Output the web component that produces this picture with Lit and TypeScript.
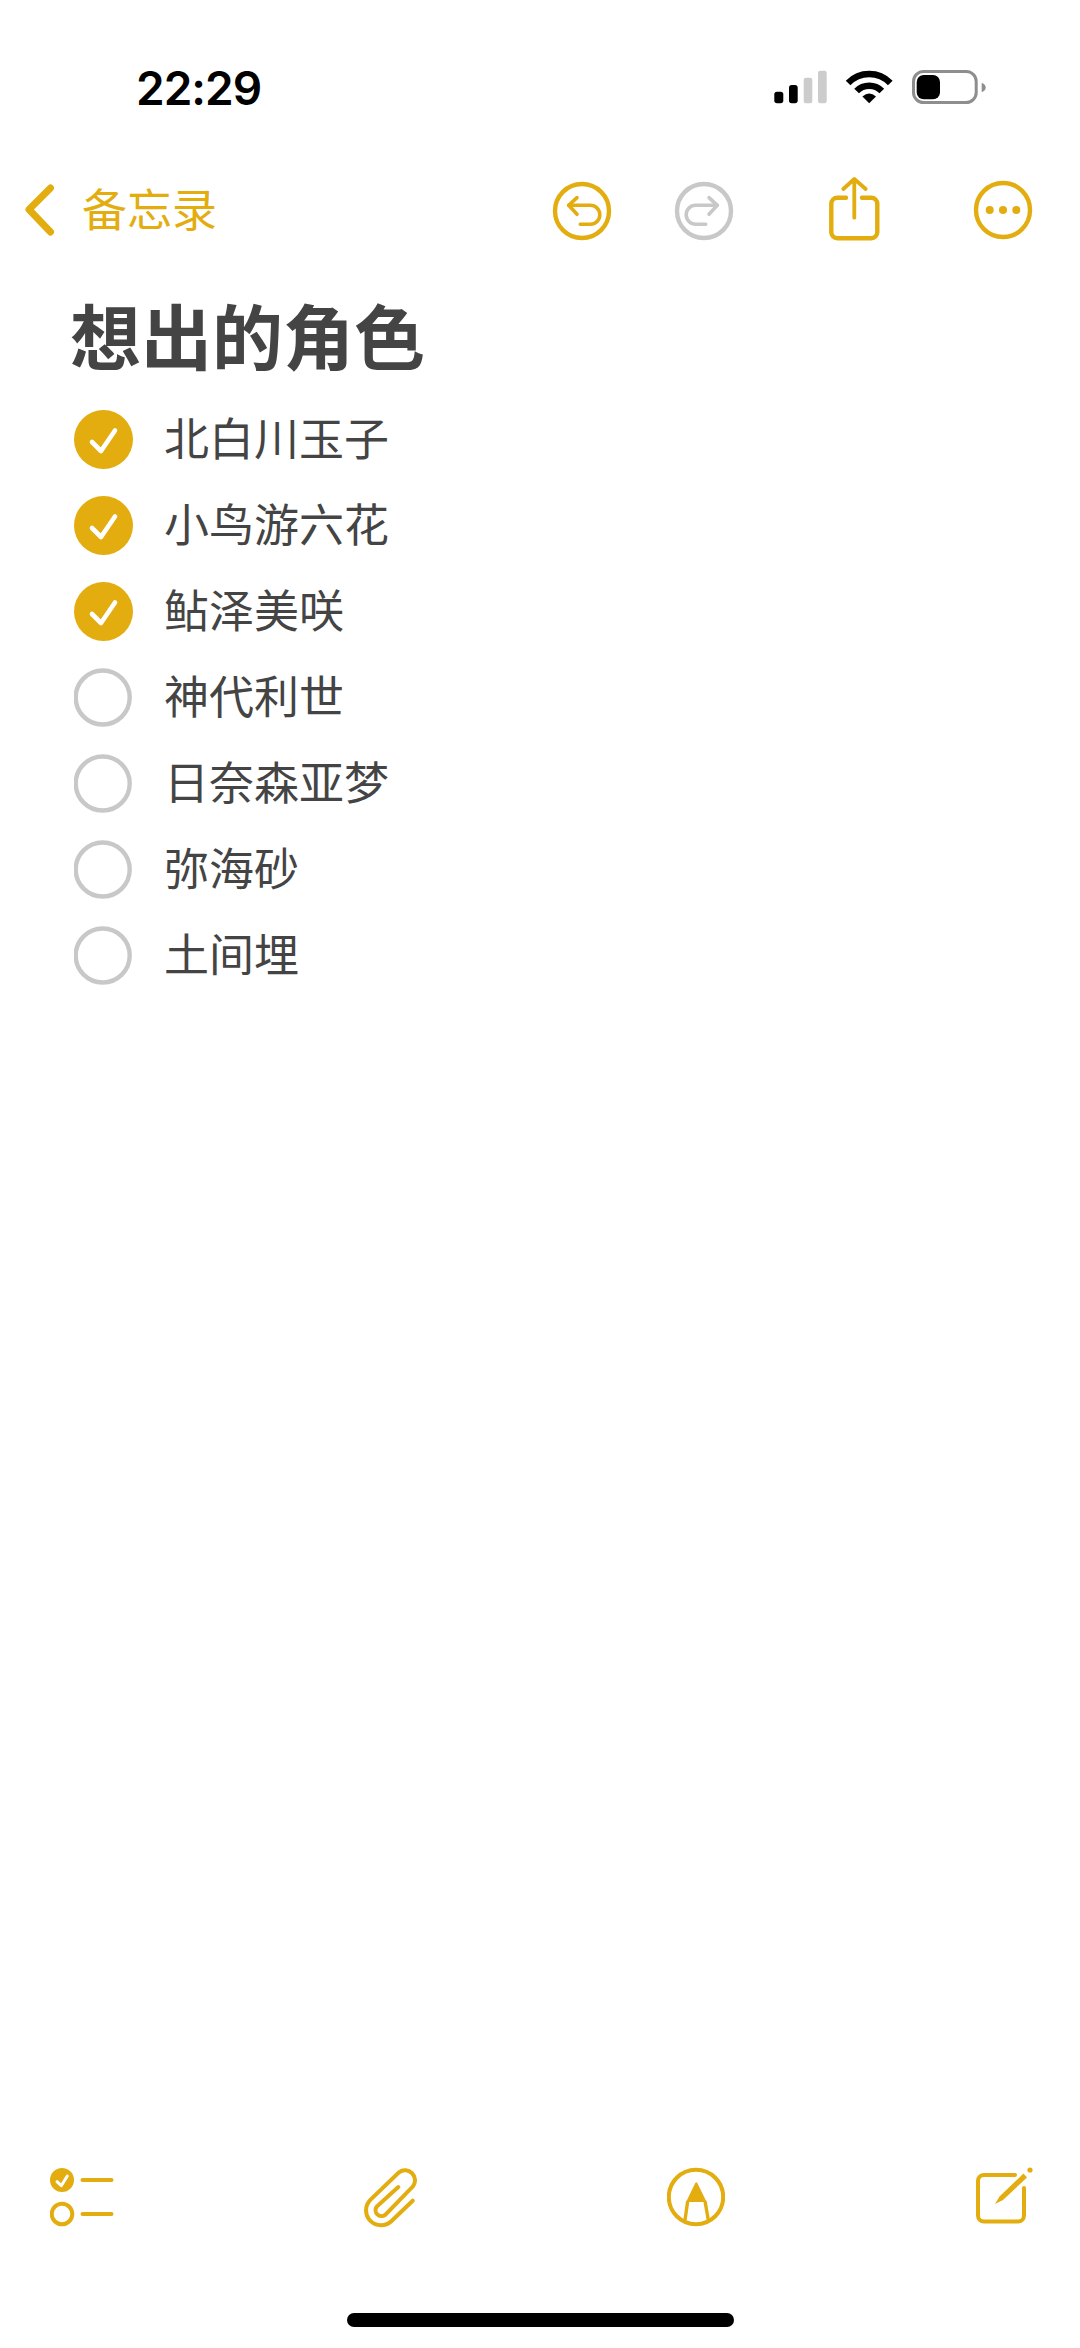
import { LitElement, css, html } from "lit";
import { customElement } from "lit/decorators.js";

type Item = { name: string; done: boolean };

const items: Item[] = [
    { name: "北白川玉子", done: true },
    { name: "小鸟游六花", done: true },
    { name: "鲇泽美咲", done: true },
    { name: "神代利世", done: false },
    { name: "日奈森亚梦", done: false },
    { name: "弥海砂", done: false },
    { name: "土间埋", done: false },
];

@customElement("app-root")
export class AppRoot extends LitElement {
    static override styles = css`
        :host {
            display: flex;
            flex-direction: column;
            height: 2348px;
            background: #fff;
            color: #444;
            font-family: "Noto Sans CJK SC", "Noto Sans", sans-serif;
        }

        svg {
            display: block;
            flex: none;
        }

        .status {
            display: flex;
            justify-content: space-between;
            align-items: center;
            height: 56px;
            margin-top: 60px;
            padding: 0 94px 0 136px;
        }

        .time {
            font: 600 46px/56px Inter, sans-serif;
            letter-spacing: -1px;
            color: #000;
        }

        .nav {
            display: grid;
            grid-template-columns: 550px 122px 157px 141.5px 64px;
            align-items: center;
            height: 80px;
            margin-top: 55px;
        }

        .back {
            display: flex;
            align-items: center;
            gap: 26px;
            padding-left: 22px;
            font-size: 45px;
            line-height: 60px;
            color: #e3ad0f;
        }

        .back span {
            padding-bottom: 6px;
        }

        h1 {
            margin: 39px 0 20px;
            padding-left: 70px;
            font-size: 71px;
            font-weight: 700;
            line-height: 86px;
        }

        .list {
            flex: 1;
            margin: 0;
            padding: 0 0 0 74px;
            list-style: none;
        }

        .list li {
            display: flex;
            align-items: center;
            gap: 31px;
            height: 86px;
            font-size: 45px;
        }

        .list span {
            padding-bottom: 6px;
        }

        .toolbar {
            display: flex;
            justify-content: space-between;
            align-items: center;
            height: 70px;
            margin-bottom: 80px;
            padding: 0 46px 0 50px;
        }

        .compose {
            margin-left: 2px;
        }

        .home {
            width: 387px;
            height: 14px;
            margin: 0 auto 21px;
            border-radius: 7px;
            background: #000;
        }
    `;

    private statusIcons() {
        return html`<svg width="212" height="36" viewBox="0 0 212 36">
            <rect x="0.3" y="21.7" width="9" height="11.6" rx="2.7" fill="#000" />
            <rect x="15" y="15" width="8.7" height="18.3" rx="2.7" fill="#000" />
            <rect x="29.7" y="7.7" width="8.6" height="25.6" rx="2.2" fill="#ccc" />
            <rect x="44" y="0.7" width="8.7" height="32.6" rx="2.2" fill="#ccc" />
            <g fill="none" stroke="#000" stroke-width="6.5">
                <path d="M74.1 12.9A29.3 29.3 0 0 1 116.3 12.9" />
                <path d="M82.6 21.1A17.5 17.5 0 0 1 107.8 21.1" />
            </g>
            <path d="M95.2 33.3L88.4 26.5Q95.2 20.5 102 26.5Z" fill="#000" />
            <rect x="139.5" y="1.5" width="62.7" height="31" rx="10" fill="none" stroke="#8e8e8e" stroke-width="3" />
            <rect x="142.7" y="5" width="23.3" height="24.3" rx="7" fill="#000" />
            <path d="M207.7 12.7Q211.7 14.5 211.7 17.5T207.7 22.3Z" fill="#8e8e8e" />
        </svg>`;
    }

    private historyIcon(color: string, mirrored: boolean) {
        return html`<svg width="64" height="64" viewBox="0 0 64 64" fill="none" stroke=${color}>
            <circle cx="32" cy="32" r="27" stroke-width="4.4" />
            <g transform=${mirrored ? "matrix(-1 0 0 1 64 0)" : ""} stroke-width="3.6" stroke-linecap="round" stroke-linejoin="round">
                <path d="M27 18.7L18.7 26.3L27 35.3" />
                <path d="M18.7 26.3H40.3A9.5 9.5 0 0 1 40.3 45.3H30.3" />
            </g>
        </svg>`;
    }

    private navIcons() {
        return html`
            ${this.historyIcon("#e3ad0f", false)} ${this.historyIcon("#c8c8c8", true)}
            <svg width="51" height="70" viewBox="0 0 51 70" fill="none" stroke="#e3ad0f" stroke-width="4.4" stroke-linecap="round" stroke-linejoin="round">
                <path d="M17 21.7H8.3A6 6 0 0 0 2.3 27.7V56.3A6 6 0 0 0 8.3 62.3H42.3A6 6 0 0 0 48.3 56.3V27.7A6 6 0 0 0 42.3 21.7H33" />
                <path d="M25.3 41.7V3.5M14.3 13L25.3 3L36.7 13" stroke-width="3.8" />
            </svg>
            <svg width="64" height="64" viewBox="0 0 64 64" fill="none">
                <circle cx="32" cy="31" r="27" stroke="#e3ad0f" stroke-width="4.4" />
                <g fill="#e3ad0f">
                    <circle cx="18.7" cy="31" r="4" />
                    <circle cx="32" cy="31" r="4" />
                    <circle cx="45.3" cy="31" r="4" />
                </g>
            </svg>
        `;
    }

    private checkbox(done: boolean) {
        if (!done) {
            return html`<svg width="59" height="59" viewBox="0 0 59 59">
                <circle cx="28.7" cy="29.5" r="27" fill="none" stroke="#c8c8c8" stroke-width="4.4" />
            </svg>`;
        }
        return html`<svg width="59" height="59" viewBox="0 0 59 59">
            <circle cx="29.5" cy="29.5" r="29.5" fill="#e3ad0f" />
            <path d="M18 32L27 41L41 20.5" fill="none" stroke="#fff" stroke-width="4.6" stroke-linecap="round" stroke-linejoin="round" />
        </svg>`;
    }

    private toolbarIcons() {
        return html`
            <svg width="64" height="70" viewBox="0 0 64 70" fill="none" stroke="#e3ad0f" stroke-linecap="round">
                <circle cx="12" cy="17" r="12" fill="#e3ad0f" stroke="none" />
                <path d="M7 18.7L11.3 22.7L17.3 13" stroke="#fff" stroke-width="3" stroke-linejoin="round" />
                <path d="M32.5 17H61.5M32.5 51H61.5" stroke-width="4" />
                <circle cx="12" cy="51" r="10.3" stroke-width="4" />
            </svg>
            <svg width="54" height="70" viewBox="0 0 54 70" fill="none" stroke="#e3ad0f" stroke-width="4" stroke-linecap="round">
                <path d="M49.7 37.7L28.3 58.3A15 15 0 0 1 7.1 37.1L36 9.3A10 10 0 0 1 50 23.3L22.2 51.9A6 6 0 0 1 13.8 43.5L35.3 24" />
            </svg>
            <svg width="58" height="70" viewBox="0 0 58 70" fill="none" stroke="#e3ad0f">
                <circle cx="29" cy="34" r="27.2" stroke-width="4" />
                <path d="M29.3 20.3L20.7 38H38Z" fill="#e3ad0f" stroke-width="2" stroke-linejoin="round" />
                <path d="M20.7 38L18 57M38 38L41.3 57" stroke-width="3.4" />
            </svg>
            <svg class="compose" width="58" height="70" viewBox="0 0 58 70" fill="none">
                <path d="M39 12H8A6 6 0 0 0 2 18V52.6A6 6 0 0 0 8 58.6H42A6 6 0 0 0 48 52.6V25" stroke="#e3ad0f" stroke-width="4" stroke-linecap="round" />
                <path d="M19 41L23.5 33.5L47.5 10.5L51 14.5L27 37Z" fill="#e3ad0f" />
                <circle cx="54" cy="7" r="2.6" fill="#e3ad0f" />
            </svg>
        `;
    }

    override render() {
        return html`
            <div class="status">
                <span class="time">22:29</span>
                ${this.statusIcons()}
            </div>
            <div class="nav">
                <div class="back">
                    <svg width="34" height="54" viewBox="0 0 34 54" fill="none" stroke="#e3ad0f" stroke-width="7" stroke-linecap="round" stroke-linejoin="round">
                        <path d="M28.5 4L7 25.5L28.5 48" />
                    </svg>
                    <span>备忘录</span>
                </div>
                ${this.navIcons()}
            </div>
            <h1>想出的角色</h1>
            <ul class="list">
                ${items.map((item) => html`<li>${this.checkbox(item.done)}<span>${item.name}</span></li>`)}
            </ul>
            <div class="toolbar">${this.toolbarIcons()}</div>
            <div class="home"></div>
        `;
    }
}
